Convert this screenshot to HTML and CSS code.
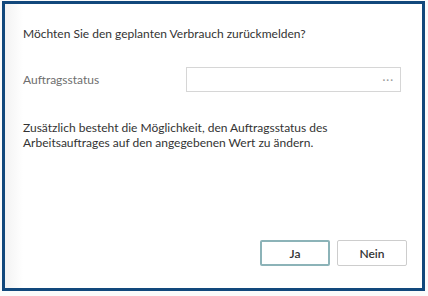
FILE: index.html
```html
<!DOCTYPE html>
<html lang="de">
<head>
<meta charset="UTF-8">
<title>Verbrauch zurückmelden</title>
<link rel="stylesheet" href="styles.css">
</head>
<body>
    <div class="dialog">
        <p class="question">Möchten Sie den geplanten Verbrauch zurückmelden?</p>
        <div class="field-row">
            <label class="field-label" for="status">Auftragsstatus</label>
            <div class="field-input" id="status">
                <span class="dots">···</span>
            </div>
        </div>
        <p class="info">Zusätzlich besteht die Möglichkeit, den Auftragsstatus des Arbeitsauftrages auf den angegebenen Wert zu ändern.</p>
        <div class="actions">
            <button class="btn btn-primary">Ja</button>
            <button class="btn">Nein</button>
        </div>
    </div>
</body>
</html>
```

FILE: styles.css
```css
body {
    margin: 0;
    padding: 0;
    font-family: Lato, "Open Sans", sans-serif;
    background: #fbfbfb;
    width: 428px;
    height: 296px;
    overflow: hidden;
}
.dialog {
    box-sizing: border-box;
    width: 423px;
    height: 290px;
    margin: 1px 0 0 2px;
    border: 3px solid #12487c;
    background: linear-gradient(90deg, #f3f3f3 0px, #ffffff 18px);
    padding: 21px 15px 22px 18px;
    display: flex;
    flex-direction: column;
    color: #333;
}
.question {
    margin: 0;
    font-size: 12px;
    line-height: 18px;
}
.field-row {
    display: flex;
    align-items: center;
    margin-top: 24px;
}
.field-label {
    width: 163px;
    font-size: 12px;
    color: #6e6e6e;
}
.field-input {
    box-sizing: border-box;
    width: 215px;
    height: 25px;
    border: 1px solid #d6d6d6;
    background: #fff;
    display: flex;
    align-items: center;
    justify-content: flex-end;
    padding-right: 6px;
}
.dots {
    font-size: 11px;
    color: #999;
    letter-spacing: 1px;
}
.info {
    margin: 28px 0 0;
    font-size: 12px;
    line-height: 15px;
}
.actions {
    margin-top: auto;
    display: flex;
    justify-content: flex-end;
    gap: 7px;
}
.btn {
    box-sizing: border-box;
    width: 70px;
    height: 26px;
    border: 1px solid #cdcdcd;
    border-radius: 2px;
    background: #fff;
    font-family: inherit;
    font-size: 12px;
    font-weight: 600;
    color: #333;
}
.btn-primary {
    border: 2px solid #8cb3b8;
}
```
